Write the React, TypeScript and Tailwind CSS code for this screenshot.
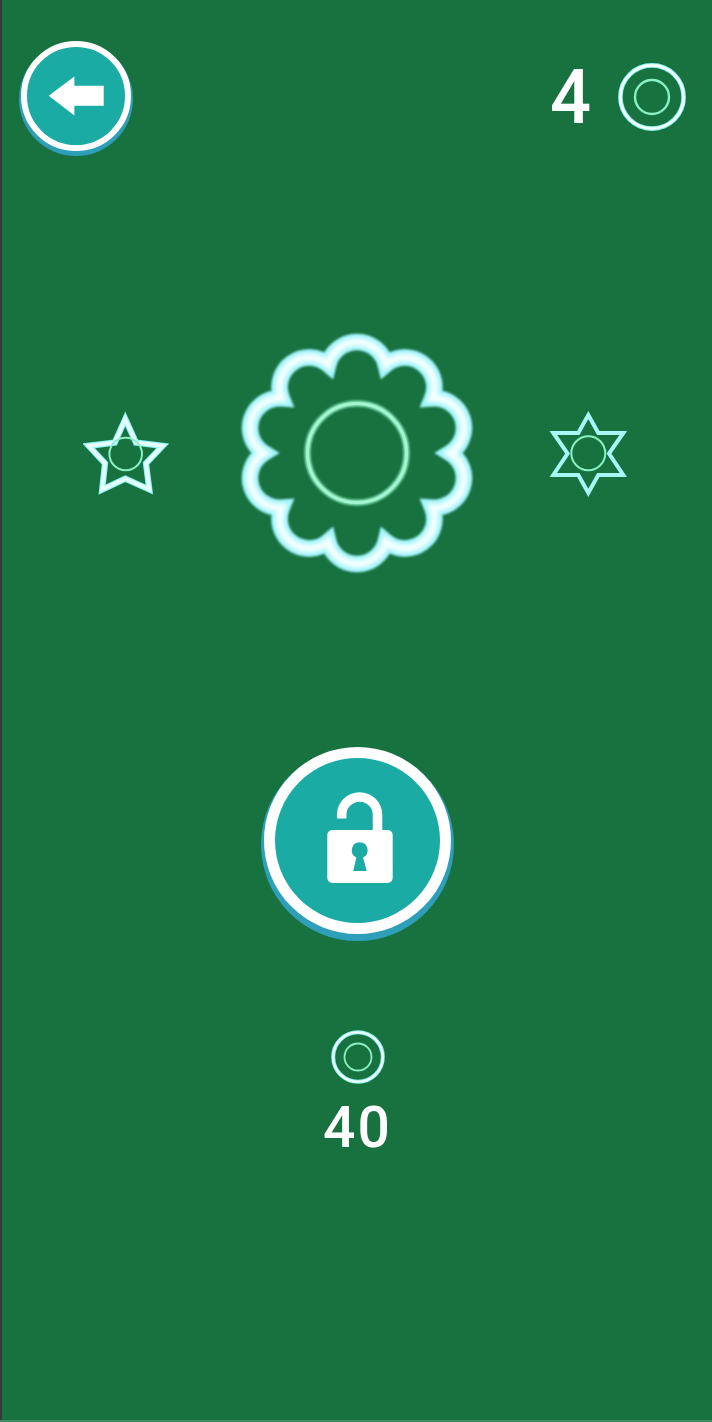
import React from "react";

const WHITE_CYAN = "#e6fdff";
const RING_GREEN = "#8cf0c4";

// ten-lobed outline used for the selected shape
function flowerPath(cx: number, cy: number, notchR: number, arcR: number, lobes: number) {
  const step = (Math.PI * 2) / lobes;
  let d = "";
  for (let i = 0; i <= lobes; i++) {
    const a = -Math.PI / 2 + step / 2 + i * step;
    const x = (cx + notchR * Math.cos(a)).toFixed(2);
    const y = (cy + notchR * Math.sin(a)).toFixed(2);
    d += i === 0 ? `M${x} ${y}` : ` A${arcR} ${arcR} 0 0 1 ${x} ${y}`;
  }
  return d + " Z";
}

function Coin({ size, outer, inner, ringW, innerW }: { size: number; outer: number; inner: number; ringW: number; innerW: number }) {
  const c = size / 2;
  return (
    <svg width={size} height={size} viewBox={`0 0 ${size} ${size}`} className="block">
      <circle cx={c} cy={c} r={outer} fill="none" stroke="#8ff3f5" strokeWidth={ringW + 1.6} />
      <circle cx={c} cy={c} r={outer} fill="none" stroke="#f6ffff" strokeWidth={ringW - 0.4} />
      <circle cx={c} cy={c} r={inner} fill="none" stroke={RING_GREEN} strokeWidth={innerW} />
    </svg>
  );
}

function Flower() {
  const d = flowerPath(125, 125, 93, 29.6, 10);
  return (
    <svg width={250} height={250} viewBox="0 0 250 250" className="block">
      <defs>
        <filter id="soft" x="-10%" y="-10%" width="120%" height="120%">
          <feGaussianBlur stdDeviation="0.8" />
        </filter>
        <filter id="softCore" x="-10%" y="-10%" width="120%" height="120%">
          <feGaussianBlur stdDeviation="2" />
        </filter>
        <filter id="softRing" x="-20%" y="-20%" width="140%" height="140%">
          <feGaussianBlur stdDeviation="1.2" />
        </filter>
      </defs>
      <path d={d} fill="none" stroke="#a0f4fc" strokeWidth={16.5} strokeLinejoin="miter" strokeMiterlimit={8} filter="url(#soft)" />
      <path d={d} fill="none" stroke="#f4ffff" strokeWidth={8} strokeLinejoin="miter" strokeMiterlimit={8} filter="url(#softCore)" />
      <circle cx={125} cy={125} r={49.5} fill="none" stroke="#86e6ba" strokeWidth={6} filter="url(#softRing)" />
      <circle cx={125} cy={125} r={49.5} fill="none" stroke="#a4f4d0" strokeWidth={3} />
    </svg>
  );
}

function StarShape() {
  const pts = "42.3,11 53,34.7 79.7,37.8 63,55.3 66.3,81.5 42.3,70.7 19.2,81.5 22,55.3 5.7,37.8 31.7,34.7";
  return (
    <svg width={90} height={90} viewBox="0 0 90 90" className="block">
      <polygon points={pts} fill="none" stroke="#8ff3f5" strokeWidth={6.2} strokeLinejoin="miter" strokeMiterlimit={10} />
      <polygon points={pts} fill="none" stroke={WHITE_CYAN} strokeWidth={4} strokeLinejoin="miter" strokeMiterlimit={10} />
      <circle cx={42.7} cy={46} r={16.3} fill="none" stroke={RING_GREEN} strokeWidth={2} />
    </svg>
  );
}

function HexShape() {
  const pts = "40.3,7 50.3,25 75.3,25 61,45.5 75.3,67 50.3,67 40.3,84.8 30.3,67 5.3,67 19.6,45.5 5.3,25 30.3,25";
  return (
    <svg width={80} height={90} viewBox="0 0 80 90" className="block">
      <polygon points={pts} fill="none" stroke="#a8f6f6" strokeWidth={4} strokeLinejoin="miter" />
      <circle cx={40.3} cy={45.3} r={17} fill="none" stroke={RING_GREEN} strokeWidth={2} />
    </svg>
  );
}

function BackButton() {
  return (
    <button className="relative block h-[115px] w-[114px] shrink-0">
      <span className="absolute bottom-0 left-0 h-[114px] w-[114px] rounded-full bg-[#2f9fb9]" />
      <span className="absolute left-[2px] top-0 flex h-[110px] w-[110px] items-center justify-center rounded-full border-[6px] border-white bg-[#1aaca4]">
        <svg width={98} height={98} viewBox="0 0 98 98" className="block">
          <polygon points="21.7,48.7 47.4,29.4 47.4,38.7 76.7,38.7 76.7,58.7 47.4,58.7 47.4,68.4" fill="#fff" />
        </svg>
      </span>
    </button>
  );
}

function UnlockButton() {
  return (
    <button className="relative block h-[194px] w-[193px]">
      <span className="absolute bottom-0 left-0 h-[193px] w-[193px] rounded-full bg-[#2f9fb9]" />
      <span className="absolute left-[3px] top-0 flex h-[187px] w-[187px] items-center justify-center rounded-full border-[11px] border-white bg-[#1aaca4]">
        <svg width={165} height={165} viewBox="0 0 165 165" className="block">
          <path d="M66.7 60.6 V56.8 A17.9 17.9 0 0 1 102.5 56.8 V74" fill="none" stroke="#fff" strokeWidth={9.5} />
          <path
            fill="#fff"
            fillRule="evenodd"
            d="M57.3 72 H112.7 a5 5 0 0 1 5 5 V120 a5 5 0 0 1 -5 5 H57.3 a5 5 0 0 1 -5 -5 V77 a5 5 0 0 1 5 -5 Z M84.7 84.3 a8 8 0 0 0 -3.4 15.2 L78.3 113 H91.7 L88.1 99.5 A8 8 0 0 0 84.7 84.3 Z"
          />
        </svg>
      </span>
    </button>
  );
}

export default function App() {
  return (
    <div className="flex h-[1422px] w-[712px] flex-col bg-[#177240] font-['Roboto',sans-serif] text-white">
      <div className="flex min-h-0 flex-1 flex-col border-l-2 border-[#333b38]">
        {/* top bar */}
        <div className="flex items-start justify-between pl-[17px] pr-[25px] pt-[41px]">
          <BackButton />
          <div className="flex items-center gap-[25px] pt-[21px]">
            <span className="block scale-x-[0.95] text-[76px] font-medium leading-[60px]">4</span>
            <Coin size={70} outer={31.6} inner={17} ringW={3} innerW={2.4} />
          </div>
        </div>

        {/* shape picker */}
        <div className="mt-[172px] flex items-center justify-between pl-[81px] pr-[84px]">
          <StarShape />
          <div className="mr-[7px]">
            <Flower />
          </div>
          <HexShape />
        </div>

        {/* unlock action */}
        <div className="mt-[169px] flex flex-col items-center pl-[1px]">
          <UnlockButton />
          <div className="mt-[88px]">
            <Coin size={56} outer={24.8} inner={13.5} ringW={2.4} innerW={1.8} />
          </div>
          <span className="mt-[20px] block text-[57px] font-medium leading-[46px] tracking-[2px]">40</span>
        </div>
      </div>
      <div className="h-[2px] bg-[#3f8a63]" />
    </div>
  );
}
